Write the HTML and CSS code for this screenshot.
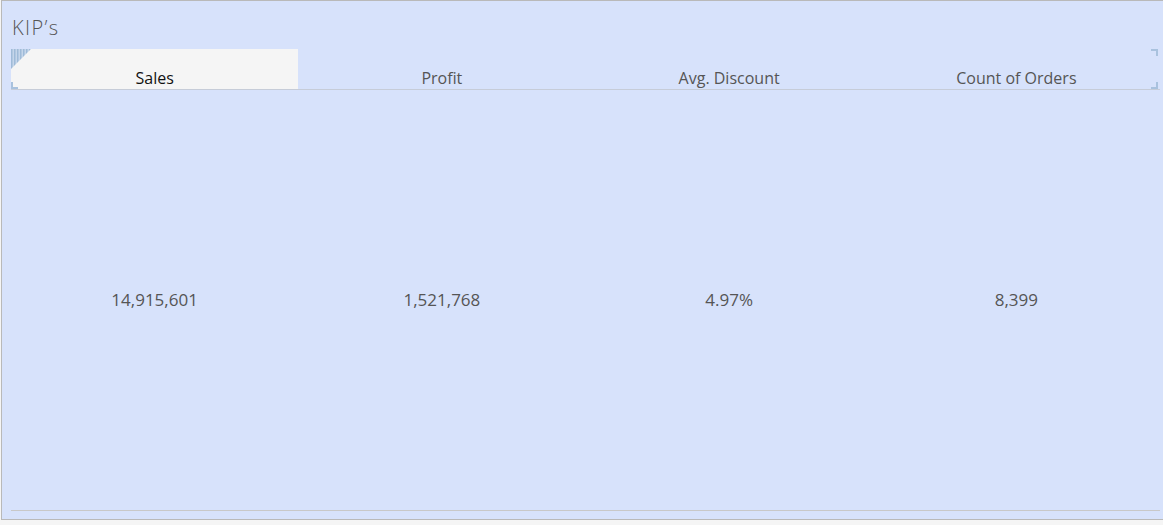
FILE: index.html
```html
<!DOCTYPE html>
<html>
<head>
<meta charset="utf-8">
<link rel="stylesheet" href="styles.css">
</head>
<body>
<div class="frame">
  <div class="title">KIP’s</div>
  <div class="table">
    <div class="header">
      <div class="hcell selected">Sales</div>
      <div class="hcell">Profit</div>
      <div class="hcell">Avg. Discount</div>
      <div class="hcell">Count of Orders</div>
      <svg class="mark tl" width="20" height="20" viewBox="0 0 20 20">
        <defs>
          <pattern id="stripes" width="3" height="20" patternUnits="userSpaceOnUse">
            <rect x="0" y="0" width="3" height="20" fill="#c5d6ea"/>
            <rect x="0" y="0" width="1.5" height="20" fill="#9fbbd8"/>
          </pattern>
        </defs>
        <polygon points="0,0 20,0 0,20" fill="url(#stripes)"/>
      </svg>
      <span class="mark bl"></span>
      <span class="mark tr"></span>
      <span class="mark br"></span>
    </div>
    <div class="values">
      <div class="vcell">14,915,601</div>
      <div class="vcell">1,521,768</div>
      <div class="vcell">4.97%</div>
      <div class="vcell">8,399</div>
    </div>
  </div>
</div>
</body>
</html>
```
FILE: styles.css
```css
html, body {
  margin: 0;
  padding: 0;
  background: #f5f5f5;
}
body {
  width: 1163px;
  height: 525px;
  overflow: hidden;
  font-family: "Open Sans", "Liberation Sans", sans-serif;
}
.frame {
  box-sizing: border-box;
  margin-left: 1px;
  width: 1170px;
  height: 520px;
  border: 1px solid #b9b9b9;
  border-right: none;
  background: #d7e2fb;
  padding: 0 0 0 9px;
  display: flex;
  flex-direction: column;
}
.title {
  height: 48px;
  box-sizing: border-box;
  padding: 15px 0 0 1px;
  font-size: 20px;
  font-weight: 300;
  letter-spacing: 1.4px;
  color: #555;
  line-height: 24px;
}
.table {
  width: 1149px;
  flex: 1;
  display: flex;
  flex-direction: column;
  border-bottom: 1px solid #c8c8c8;
  margin-bottom: 8px;
}
.header {
  position: relative;
  display: grid;
  grid-template-columns: repeat(4, 1fr);
  height: 40px;
  border-bottom: 1px solid #c6ccd8;
}
.hcell {
  font-size: 16px;
  color: #555;
  display: flex;
  align-items: flex-end;
  justify-content: center;
  padding-bottom: 1px;
  line-height: 20px;
}
.hcell.selected {
  background: #f5f5f5;
  color: #111;
}
.mark {
  position: absolute;
}
.mark.tl {
  left: 0;
  top: 0;
}
.mark.bl {
  left: 0;
  bottom: 0;
  width: 5px;
  height: 5px;
  border-left: 2px solid #a9c2de;
  border-bottom: 2px solid #a9c2de;
}
.mark.tr {
  right: 2px;
  top: 0;
  width: 5px;
  height: 5px;
  border-right: 2px solid #a9c2de;
  border-top: 2px solid #a9c2de;
}
.mark.br {
  right: 2px;
  bottom: 0;
  width: 5px;
  height: 5px;
  border-right: 2px solid #a9c2de;
  border-bottom: 2px solid #a9c2de;
}
.values {
  flex: 1;
  display: grid;
  grid-template-columns: repeat(4, 1fr);
  align-items: center;
}
.vcell {
  text-align: center;
  font-size: 17px;
  color: #555;
  line-height: 20px;
  padding-top: 1px;
  padding-bottom: 1px;
}
```
